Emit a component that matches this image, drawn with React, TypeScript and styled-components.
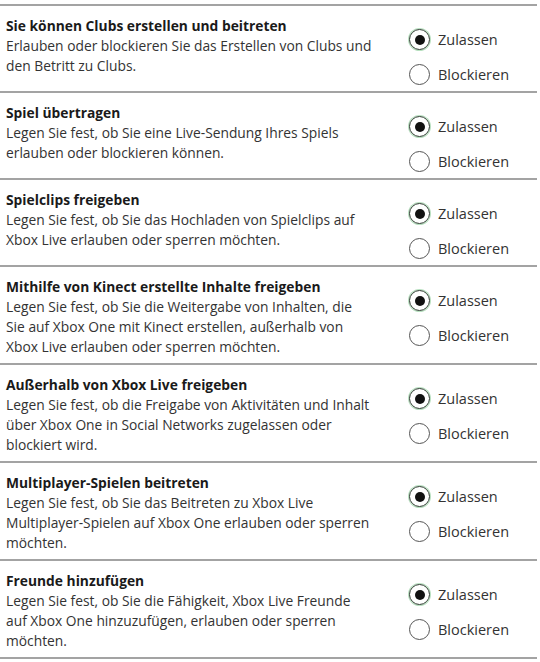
import React, { useState } from "react";
import styled, { createGlobalStyle } from "styled-components";

const GlobalStyle = createGlobalStyle`
  html, body {
    margin: 0;
    padding: 0;
    background: #ffffff;
  }
  body {
    font-family: "Open Sans", "Noto Sans", sans-serif;
    color: #222;
  }
`;

const List = styled.div`
  width: 537px;
  margin-top: 4px;
  border-top: 2px solid #a3a3a3;
`;

const Row = styled.div`
  display: flex;
  align-items: flex-start;
  padding: 10px 0 6px 6px;
  border-bottom: 2px solid #a3a3a3;
`;

const Text = styled.div`
  width: 397px;
  flex: none;
`;

const Title = styled.div`
  font-size: 13.8px;
  font-weight: 700;
  line-height: 20px;
  color: #1a1a1a;
  white-space: nowrap;
`;

const Line = styled.div`
  font-size: 13.8px;
  line-height: 20px;
  color: #333;
  white-space: nowrap;
`;

const Options = styled.div`
  display: flex;
  flex-direction: column;
  row-gap: 14px;
  padding-top: 13px;
  padding-left: 6px;
`;

const Option = styled.label`
  display: flex;
  align-items: center;
  column-gap: 8px;
  height: 21px;
  cursor: pointer;
  font-size: 14.5px;
  color: #333;
`;

const Circle = styled.span<{ $checked: boolean }>`
  box-sizing: border-box;
  width: 21px;
  height: 21px;
  border-radius: 50%;
  border: 1.5px solid ${(p) => (p.$checked ? "#2f3b31" : "#555")};
  box-shadow: ${(p) => (p.$checked ? "0 0 0 1px #b8e0c0" : "none")};
  display: flex;
  align-items: center;
  justify-content: center;

  &::after {
    content: "";
    width: 10px;
    height: 10px;
    border-radius: 50%;
    background: #111;
    display: ${(p) => (p.$checked ? "block" : "none")};
  }
`;

const settings = [
  {
    title: "Sie können Clubs erstellen und beitreten",
    lines: [
      "Erlauben oder blockieren Sie das Erstellen von Clubs und",
      "den Betritt zu Clubs.",
    ],
  },
  {
    title: "Spiel übertragen",
    lines: [
      "Legen Sie fest, ob Sie eine Live-Sendung Ihres Spiels",
      "erlauben oder blockieren können.",
    ],
  },
  {
    title: "Spielclips freigeben",
    lines: [
      "Legen Sie fest, ob Sie das Hochladen von Spielclips auf",
      "Xbox Live erlauben oder sperren möchten.",
    ],
  },
  {
    title: "Mithilfe von Kinect erstellte Inhalte freigeben",
    lines: [
      "Legen Sie fest, ob Sie die Weitergabe von Inhalten, die",
      "Sie auf Xbox One mit Kinect erstellen, außerhalb von",
      "Xbox Live erlauben oder sperren möchten.",
    ],
  },
  {
    title: "Außerhalb von Xbox Live freigeben",
    lines: [
      "Legen Sie fest, ob die Freigabe von Aktivitäten und Inhalt",
      "über Xbox One in Social Networks zugelassen oder",
      "blockiert wird.",
    ],
  },
  {
    title: "Multiplayer-Spielen beitreten",
    lines: [
      "Legen Sie fest, ob Sie das Beitreten zu Xbox Live",
      "Multiplayer-Spielen auf Xbox One erlauben oder sperren",
      "möchten.",
    ],
  },
  {
    title: "Freunde hinzufügen",
    lines: [
      "Legen Sie fest, ob Sie die Fähigkeit, Xbox Live Freunde",
      "auf Xbox One hinzuzufügen, erlauben oder sperren",
      "möchten.",
    ],
  },
];

const SettingRow = ({ title, lines }: { title: string; lines: string[] }) => {
  const [allowed, setAllowed] = useState(true);
  return (
    <Row>
      <Text>
        <Title>{title}</Title>
        {lines.map((line) => (
          <Line key={line}>{line}</Line>
        ))}
      </Text>
      <Options>
        <Option onClick={() => setAllowed(true)}>
          <Circle $checked={allowed} />
          Zulassen
        </Option>
        <Option onClick={() => setAllowed(false)}>
          <Circle $checked={!allowed} />
          Blockieren
        </Option>
      </Options>
    </Row>
  );
};

export default function App() {
  return (
    <>
      <GlobalStyle />
      <List>
        {settings.map((s) => (
          <SettingRow key={s.title} title={s.title} lines={s.lines} />
        ))}
      </List>
    </>
  );
}
